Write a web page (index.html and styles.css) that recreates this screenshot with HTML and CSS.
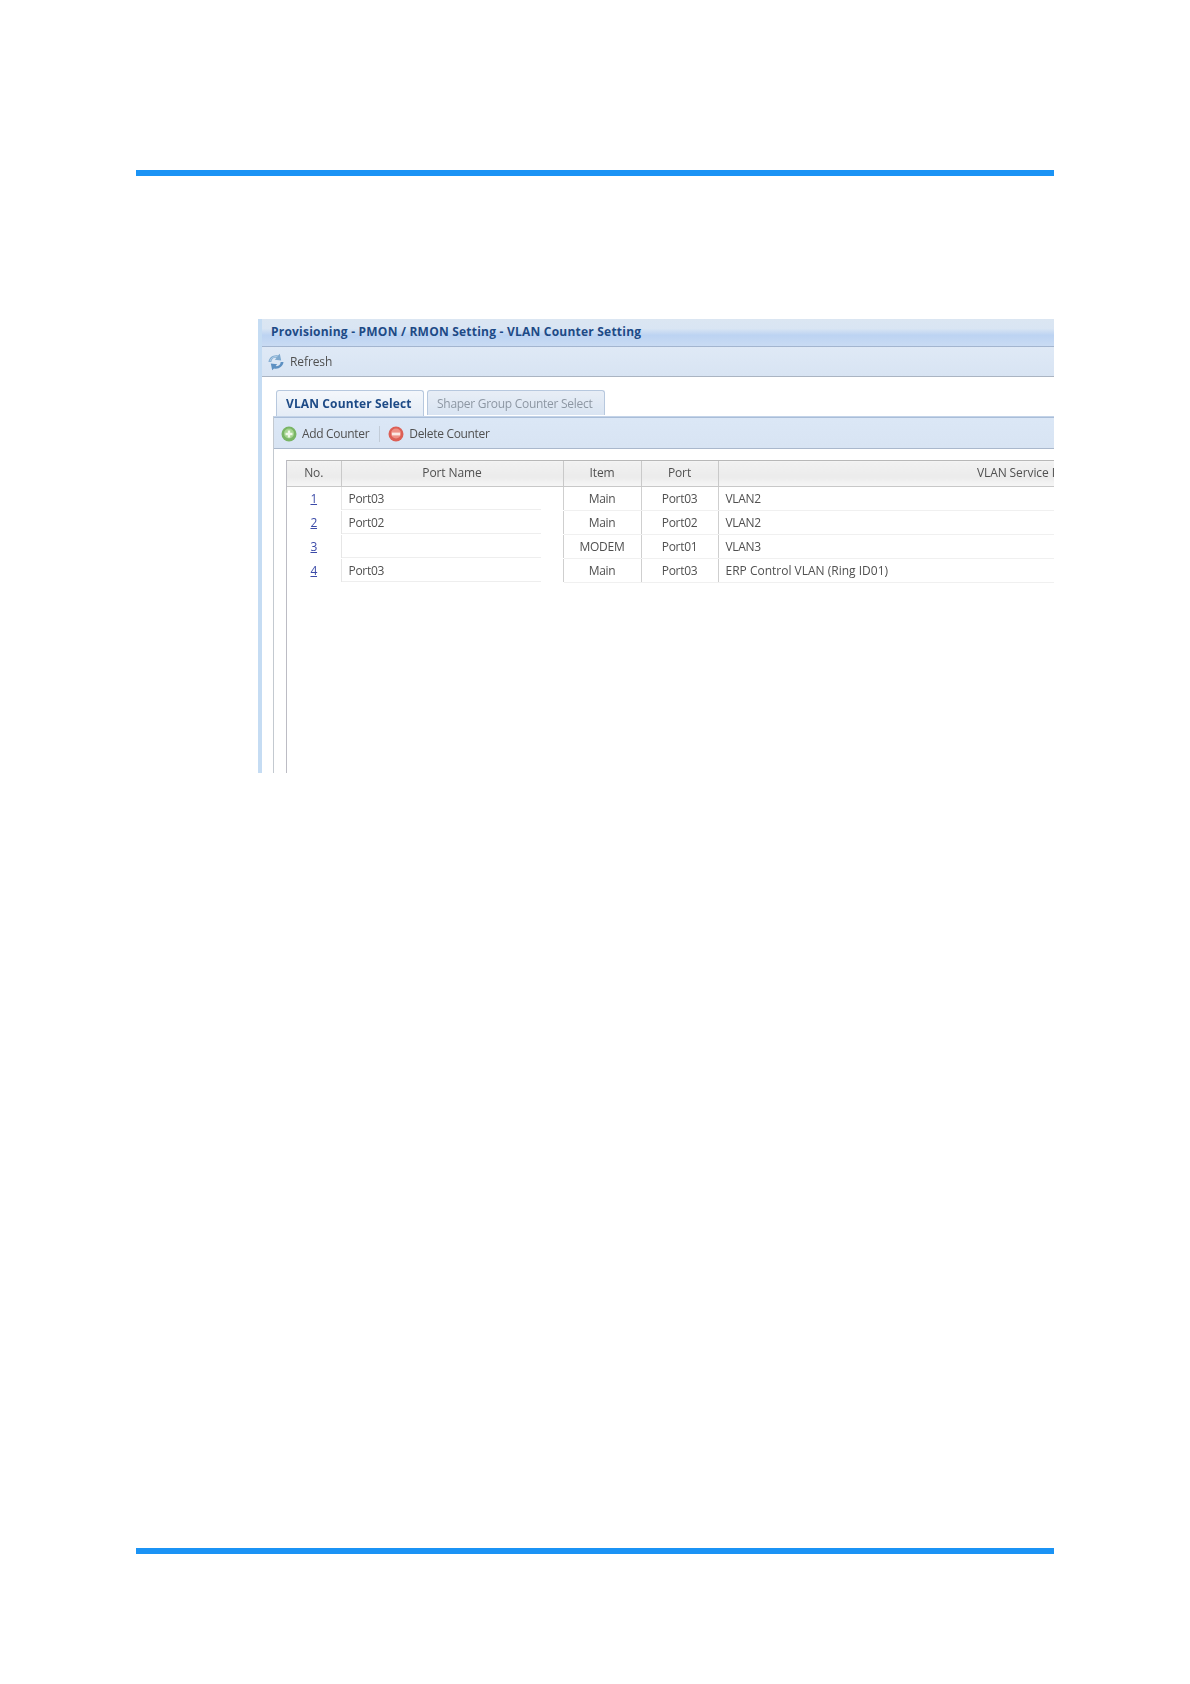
FILE: index.html
```html
<!DOCTYPE html>
<html lang="en">
<head>
<meta charset="utf-8">
<title>VLAN Counter Setting</title>
<link rel="stylesheet" href="styles.css">
</head>
<body>
<div class="page">
  <div class="rule"></div>
  <section class="shot">
    <div class="shot-inner">
      <header class="title-bar">Provisioning - PMON / RMON Setting - VLAN Counter Setting</header>
      <div class="main-toolbar">
        <svg class="icon-refresh" viewBox="0 0 18 18" width="18" height="18" aria-hidden="true">
          <path d="M1.5 9C2 4.5 6.5 1.5 11 2.6L12.8.8l1.4 6.6-6.4-.7 1.6-1.7C6.6 4.3 4.6 6 4.3 9z" fill="#7ea9cf"/>
          <path d="M16.5 9c-.5 4.5-5 7.5-9.5 6.4l-1.8 1.8-1.4-6.6 6.4.7-1.6 1.7c2.8.7 4.8-1 5.1-4z" fill="#5d90c2"/>
          <path d="M3 8.4C3.8 5 7 3.2 10.4 3.7" fill="none" stroke="#c4dbee" stroke-width=".8"/>
        </svg>
        <span>Refresh</span>
      </div>
      <div class="panel">
        <div class="tabs">
          <div class="tab tab-active">VLAN Counter Select</div>
          <div class="tab tab-idle">Shaper Group Counter Select</div>
        </div>
        <div class="tab-body">
          <div class="sub-toolbar">
            <span class="tool">
              <svg viewBox="0 0 16 16" width="16" height="16" aria-hidden="true">
                <circle cx="8" cy="8" r="7.5" fill="#79b565"/>
                <circle cx="8" cy="7.5" r="5" fill="#a5d48f"/>
                <path d="M6.8 4.5h2.4v2.3h2.3v2.4H9.2v2.3H6.8V9.2H4.5V6.8h2.3z" fill="#f0f8e8"/>
              </svg>
              Add Counter
            </span>
            <span class="tool-sep"></span>
            <span class="tool">
              <svg viewBox="0 0 16 16" width="16" height="16" aria-hidden="true">
                <circle cx="8" cy="8" r="7.5" fill="#dc5f55"/>
                <circle cx="8" cy="7.5" r="5" fill="#ee9186"/>
                <rect x="4" y="6.6" width="8" height="2.8" fill="#fbe9e4"/>
              </svg>
              Delete Counter
            </span>
          </div>
          <div class="grid-wrap">
            <table class="grid">
              <colgroup>
                <col class="c-no"><col class="c-name"><col class="c-item"><col class="c-port"><col class="c-vlan">
              </colgroup>
              <thead>
                <tr><th>No.</th><th>Port Name</th><th>Item</th><th>Port</th><th>VLAN Service ID</th></tr>
              </thead>
              <tbody>
                <tr><td class="ctr"><a href="#">1</a></td><td class="name">Port03</td><td class="ctr">Main</td><td class="ctr">Port03</td><td>VLAN2</td></tr>
                <tr><td class="ctr"><a href="#">2</a></td><td class="name">Port02</td><td class="ctr">Main</td><td class="ctr">Port02</td><td>VLAN2</td></tr>
                <tr><td class="ctr"><a href="#">3</a></td><td class="name"></td><td class="ctr">MODEM</td><td class="ctr">Port01</td><td>VLAN3</td></tr>
                <tr><td class="ctr"><a href="#">4</a></td><td class="name">Port03</td><td class="ctr">Main</td><td class="ctr">Port03</td><td class="long">ERP Control VLAN (Ring ID01)</td></tr>
              </tbody>
            </table>
          </div>
        </div>
      </div>
    </div>
  </section>
  <div class="rule rule-bottom"></div>
</div>
</body>
</html>
```
FILE: styles.css
```css
* { box-sizing: border-box; }
html, body { margin: 0; background: #fff; }
.page { width: 1190px; height: 1684px; padding-top: 170px; padding-left: 136px; overflow: hidden; }
.rule { width: 918px; height: 6px; background: #1b93f5; }
.rule-bottom { margin-top: 775px; }
.shot {
  width: 796px; height: 454px; margin: 143px 0 0 122px; overflow: hidden;
  font: 12px/16px Tahoma, "Open Sans", "Noto Sans", sans-serif; color: #505050;
  filter: blur(.45px);
}
.shot-inner { width: 796px; height: 454px; border-left: 4px solid #c5dcf3; display: flex; flex-direction: column; }
.title-bar {
  height: 28px; padding: 5px 0 0 9px; font-weight: 700; font-size: 12px; letter-spacing: .22px; color: #1d4a86; white-space: nowrap;
  background: linear-gradient(#dbe6f2 0, #d9e5f3 35%, #bcd3f2 60%, #c9dbf3 100%);
  border-bottom: 1px solid #a3b5cf;
}
.main-toolbar {
  height: 30px; display: flex; align-items: center; gap: 5px; padding-left: 5px; letter-spacing: -.1px;
  background: linear-gradient(#dfe9f6, #d8e4f3);
  border-bottom: 1px solid #aab4c2;
}
.panel { flex: 1; min-height: 0; padding: 13px 0 0 11px; }
.tabs { display: flex; gap: 3px; height: 26px; padding-left: 3px; }
.tab {
  height: 25px; padding: 5px 0 0 9px; border: 1px solid #b7c8de; border-bottom: 0; border-radius: 3px 3px 0 0;
  white-space: nowrap;
}
.tab-active { width: 148px; height: 26px; font-weight: 700; letter-spacing: .12px; color: #1d4a86; background: linear-gradient(#f4f7fb, #e4ecf6); }
.tab-idle { width: 178px; letter-spacing: -.28px; color: #8d97a3; background: linear-gradient(#e8eef6, #d9e4f2); }
.tab-body { height: 365px; border-left: 1px solid #c3c9d0; border-top: 1px solid #c3d3e8; }
.sub-toolbar {
  height: 32px; display: flex; align-items: center; padding: 1px 0 0 7px; letter-spacing: -.32px;
  background: linear-gradient(#dbe7f6, #d8e4f3);
  border-bottom: 1px solid #aab8cc;
  border-top: 1px solid #a9bdd8;
}
.tool { display: inline-flex; align-items: center; gap: 5px; }
.tool-sep { width: 1px; height: 16px; background: #c2ccd8; margin: 0 8px 0 10px; }
.grid-wrap { margin: 11px 0 0 12px; height: 320px; border-left: 1px solid #bcbcc4; }
.grid { width: 1035px; table-layout: fixed; border-collapse: collapse; }
.c-no { width: 54px; } .c-name { width: 222px; } .c-item { width: 78px; } .c-port { width: 77px; } .c-vlan { width: 604px; }
.grid th {
  height: 26px; padding: 0 0 1px; font-weight: 400; color: #505050; text-align: center; letter-spacing: -.1px;
  background: linear-gradient(#f2f2f2, #ebebeb 60%, #f6f6f6);
  border-top: 1px solid #b8b8b8; border-left: 1px solid #c9c9c9; border-bottom: 1px solid #c8c8c8;
}
.grid th:first-child { border-left: 0; }
.grid td { height: 24px; padding: 1px 7px 0; letter-spacing: -.3px; border-left: 1px solid #cfcfcf; border-bottom: 1px solid #f0f0f0; white-space: nowrap; }
.grid td:first-child { border-left: 0; border-bottom-color: #fff; }
.grid td.name {
  border-left-color: #e6e6e6; border-bottom-color: #fff;
  background: linear-gradient(#eeeeee, #eeeeee) 0 100% / 199px 1px no-repeat;
}
.grid td.long { letter-spacing: 0; }
.grid .ctr { text-align: center; }
.grid a { color: #3b4aa8; text-decoration: underline; }
```
